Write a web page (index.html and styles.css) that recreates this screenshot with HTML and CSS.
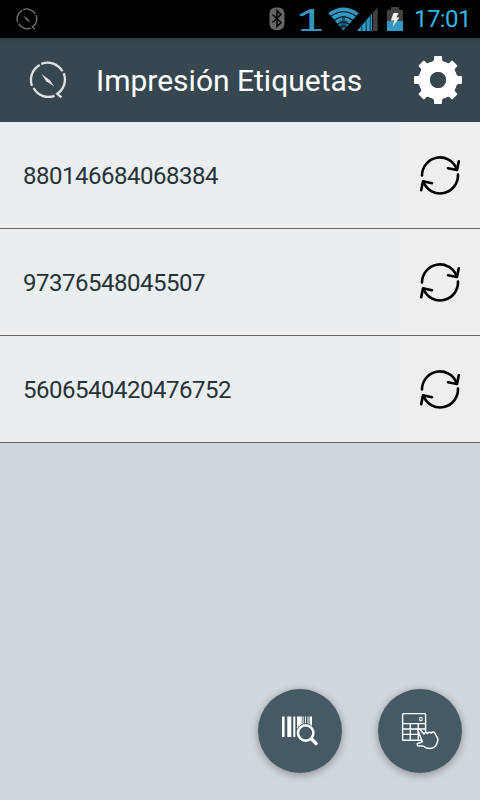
FILE: index.html
```html
<!DOCTYPE html>
<html lang="es">
<head>
  <meta charset="UTF-8" />
  <meta name="viewport" content="width=device-width, initial-scale=1" />
  <title>Impresión Etiquetas</title>
  <link rel="stylesheet" href="styles.css">
</head>
<body>

  <!-- Iconos reutilizados -->
  <svg class="defs" width="0" height="0">
    <symbol id="logo" viewBox="0 0 38 38">
      <g fill="none" stroke="currentColor" stroke-width="2.3">
        <path d="M12.3 2.9A17 17 0 0 1 33.4 10.2" />
        <path d="M34.7 12.3A17 17 0 0 1 28.3 32.8L32.5 36.3" />
        <path d="M25.5 34.8A17 17 0 0 1 4.6 27" />
        <path d="M3 24.8A17 17 0 0 1 10.8 4" />
      </g>
      <path d="M12.5 13 20.7 18.9 25.3 25.5 17.2 20.2Z" fill="currentColor" />
    </symbol>
    <symbol id="recargar" viewBox="0 0 42 42">
      <g fill="none" stroke="#000" stroke-width="2.6" stroke-linecap="round" stroke-linejoin="round">
        <path d="M3 21.500A17.900 18.200 0 0 1 37.500 14.800" />
        <path d="M39.800 7.200 38 16 29 14.300" />
        <path d="M39 20.500A17.900 18.200 0 0 1 4.500 28" />
        <path d="M2.200 36.300 4 27.200 13 29.200" />
      </g>
    </symbol>
  </svg>

  <!-- Barra de estado -->
  <div class="estado">
    <svg class="estado-logo" width="22" height="22"><use href="#logo" /></svg>
    <svg class="bluetooth" width="16" height="24" viewBox="0 0 16 24">
      <rect x="0.5" y="0.5" width="15" height="22.5" rx="6" fill="#666" />
      <path d="M3.5 7.5 12 15.5 8 19.5V3.5L12 7.5 3.5 15.5" fill="none" stroke="#000" stroke-width="1.5" />
    </svg>
    <span class="uno">1</span>
    <svg class="wifi" width="31" height="24" viewBox="0 0 31 24">
      <path d="M0.2 6Q15.5 -5 30.8 6L15.5 23.5Z" fill="#3397c1" />
      <g fill="none" stroke="#001018" stroke-width="1.2">
        <path d="M2.5 9.5Q15.5 0 28.5 9.5" />
        <path d="M6 13.5Q15.5 6 25 13.5" />
        <path d="M9.5 17.3Q15.5 12.3 21.5 17.3" />
        <path d="M12 20.5Q15.5 17.7 19 20.5" />
      </g>
      <path d="M13 21.5 11.5 13.5H14V9H17V13.5H19.5L18 21.5Z" fill="#00222f" opacity=".55" />
    </svg>
    <svg class="senal" width="21" height="24" viewBox="0 0 21 24">
      <path d="M0 24 15 6.5V24Z" fill="#3397c1" />
      <path d="M16 5.5 20.7 0V24H16Z" fill="#404040" />
      <path d="M4.7 16V24M9.2 11V24M13.2 7V24" stroke="#073348" stroke-width="1" />
    </svg>
    <svg class="bateria" width="16" height="24" viewBox="0 0 16 24">
      <path d="M4 0H12V3H16V14H0V3H4Z" fill="#424242" />
      <path d="M0 14H16V24H0Z" fill="#3397c1" />
      <path d="M6.5 6H11.5L9.5 10.5H12.5L5.5 20 7.3 13.5H3.8Z" fill="#f2f2f2" />
    </svg>
    <span class="hora">17:01</span>
  </div>

  <!-- Cabecera -->
  <header class="cabecera">
    <svg class="cabecera-logo" width="38" height="38"><use href="#logo" /></svg>
    <h1>Impresión Etiquetas</h1>
    <svg class="ajustes" width="48" height="48" viewBox="-24 -24 48 48">
      <g fill="#fff">
        <path id="diente" d="M-8.5 -14 -7.5 -17.8Q-4.3 -18.7 -4 -20V-23Q-4 -24 -3 -24H3Q4 -24 4 -23V-20Q4.3 -18.7 7.5 -17.8L8.5 -14Z" />
        <use href="#diente" transform="rotate(45)" />
        <use href="#diente" transform="rotate(90)" />
        <use href="#diente" transform="rotate(135)" />
        <use href="#diente" transform="rotate(180)" />
        <use href="#diente" transform="rotate(225)" />
        <use href="#diente" transform="rotate(270)" />
        <use href="#diente" transform="rotate(315)" />
      </g>
      <circle r="13" fill="none" stroke="#fff" stroke-width="10" />
      <circle r="8" fill="#37474f" />
    </svg>
  </header>

  <!-- Lista de etiquetas -->
  <ul class="lista">
    <li>
      <span class="codigo">880146684068384</span>
      <button class="recargar"><svg width="42" height="42"><use href="#recargar" /></svg></button>
    </li>
    <li>
      <span class="codigo">97376548045507</span>
      <button class="recargar"><svg width="42" height="42"><use href="#recargar" /></svg></button>
    </li>
    <li>
      <span class="codigo">5606540420476752</span>
      <button class="recargar"><svg width="42" height="42"><use href="#recargar" /></svg></button>
    </li>
  </ul>

  <!-- Botones flotantes -->
  <div class="acciones">
    <button class="flotante">
      <svg width="40" height="40" viewBox="0 0 40 40">
        <path d="M2 5.5H4.6V26H2ZM7.3 5.5H11.3V26H7.3ZM13.3 5.5H15.3V26H13.3ZM17 5.5H21.8V26H17ZM22.6 5.5H23.6V14H22.6ZM25 5.5H26V14H25ZM27.6 5.5H28.6V14H27.6ZM29.6 5.5H32V15H29.6Z" fill="#fff" />
        <circle cx="25.7" cy="22" r="9.7" fill="#455a64" />
        <circle cx="25.7" cy="22" r="7.7" fill="#455a64" stroke="#fff" stroke-width="2.5" />
        <path d="M31.5 28 36 32.5" stroke="#fff" stroke-width="3.4" stroke-linecap="round" />
      </svg>
    </button>
    <button class="flotante">
      <svg width="40" height="40" viewBox="0 0 40 40">
        <g fill="none" stroke="#fff" stroke-width="1.4">
          <rect x="2.6" y="2.6" width="23" height="26.6" rx="0.8" />
          <path d="M2.6 12.6H25.6M2.6 18H25.6M2.6 23.4H25.6M10.3 12.6V29.2M18.3 12.6V29.2" />
          <path d="M19.7 6.3H22V9.7H19.7Z" stroke-width="1" />
        </g>
        <path d="M17.3 18.3Q19.3 17.3 20.5 19L24 23Q25.5 20.5 27.5 22.5 29.5 20.3 31.3 22 33.5 19.7 35 22.3L37.7 27.3Q38.5 30.5 36.5 33.5 34.5 37.5 29.5 37.5 26 37.3 23 35L17.5 34.8 17.3 32.6 22.5 30.8Z" fill="#455a64" stroke="#fff" stroke-width="1.5" stroke-linejoin="round" />
      </svg>
    </button>
  </div>

</body>
</html>
```
FILE: styles.css
```css
* {
  box-sizing: border-box;
}

body {
  margin: 0;
  height: 800px;
  display: flex;
  flex-direction: column;
  font-family: Roboto, sans-serif;
  background: #d0d7dd;
  overflow: hidden;
}

svg {
  display: block;
  flex: none;
}

button {
  border: none;
  padding: 0;
  cursor: pointer;
}

.defs {
  position: absolute;
}

/* barra de estado */
.estado {
  height: 38px;
  display: flex;
  align-items: center;
  padding: 0 10px 0 16px;
  background: #000;
}

.estado-logo {
  color: #777;
  margin-right: auto;
}

.uno {
  width: 26px;
  margin: 0 5px 0 12px;
  text-align: center;
  font-family: Lato, sans-serif;
  font-size: 31px;
  line-height: 38px;
  color: #3397c1;
  transform: scaleX(1.7);
}

.wifi {
  margin-right: -2px;
}

.bateria {
  margin-left: 9px;
}

.hora {
  width: 56px;
  margin-left: 11px;
  padding-top: 1px;
  font-size: 24px;
  line-height: 37px;
  letter-spacing: -0.6px;
  white-space: nowrap;
  color: #33b5e5;
}

/* cabecera */
.cabecera {
  height: 84px;
  display: flex;
  align-items: center;
  padding: 0 18px 0 29px;
  background: linear-gradient(#2f3d44, #37474f 6px);
  color: white;
}

.cabecera-logo {
  color: #dfe3e5;
}

h1 {
  flex: 1;
  margin: 0 0 0 29px;
  padding-top: 2px;
  font-size: 30px;
  font-weight: 400;
  line-height: 82px;
  white-space: nowrap;
}

/* lista */
.lista {
  list-style: none;
  margin: 0;
  padding: 0;
}

.lista li {
  height: 107px;
  display: flex;
  border-bottom: 1px solid #666;
  background: #ebeef1;
}

.codigo {
  flex: 1;
  padding: 2px 0 0 23px;
  font-size: 24px;
  line-height: 104px;
  letter-spacing: -0.48px;
  color: #263238;
}

.recargar {
  width: 80px;
  padding: 0 0 1px 19px;
  background: #eee;
}

/* botones flotantes */
.acciones {
  display: flex;
  justify-content: flex-end;
  gap: 36px;
  margin-top: auto;
  padding: 0 18px 27px 0;
}

.flotante {
  width: 84px;
  height: 84px;
  display: flex;
  align-items: center;
  justify-content: center;
  border-radius: 50%;
  background: #455a64;
  box-shadow: 0 2px 8px rgba(0, 0, 0, 0.35);
}
```
